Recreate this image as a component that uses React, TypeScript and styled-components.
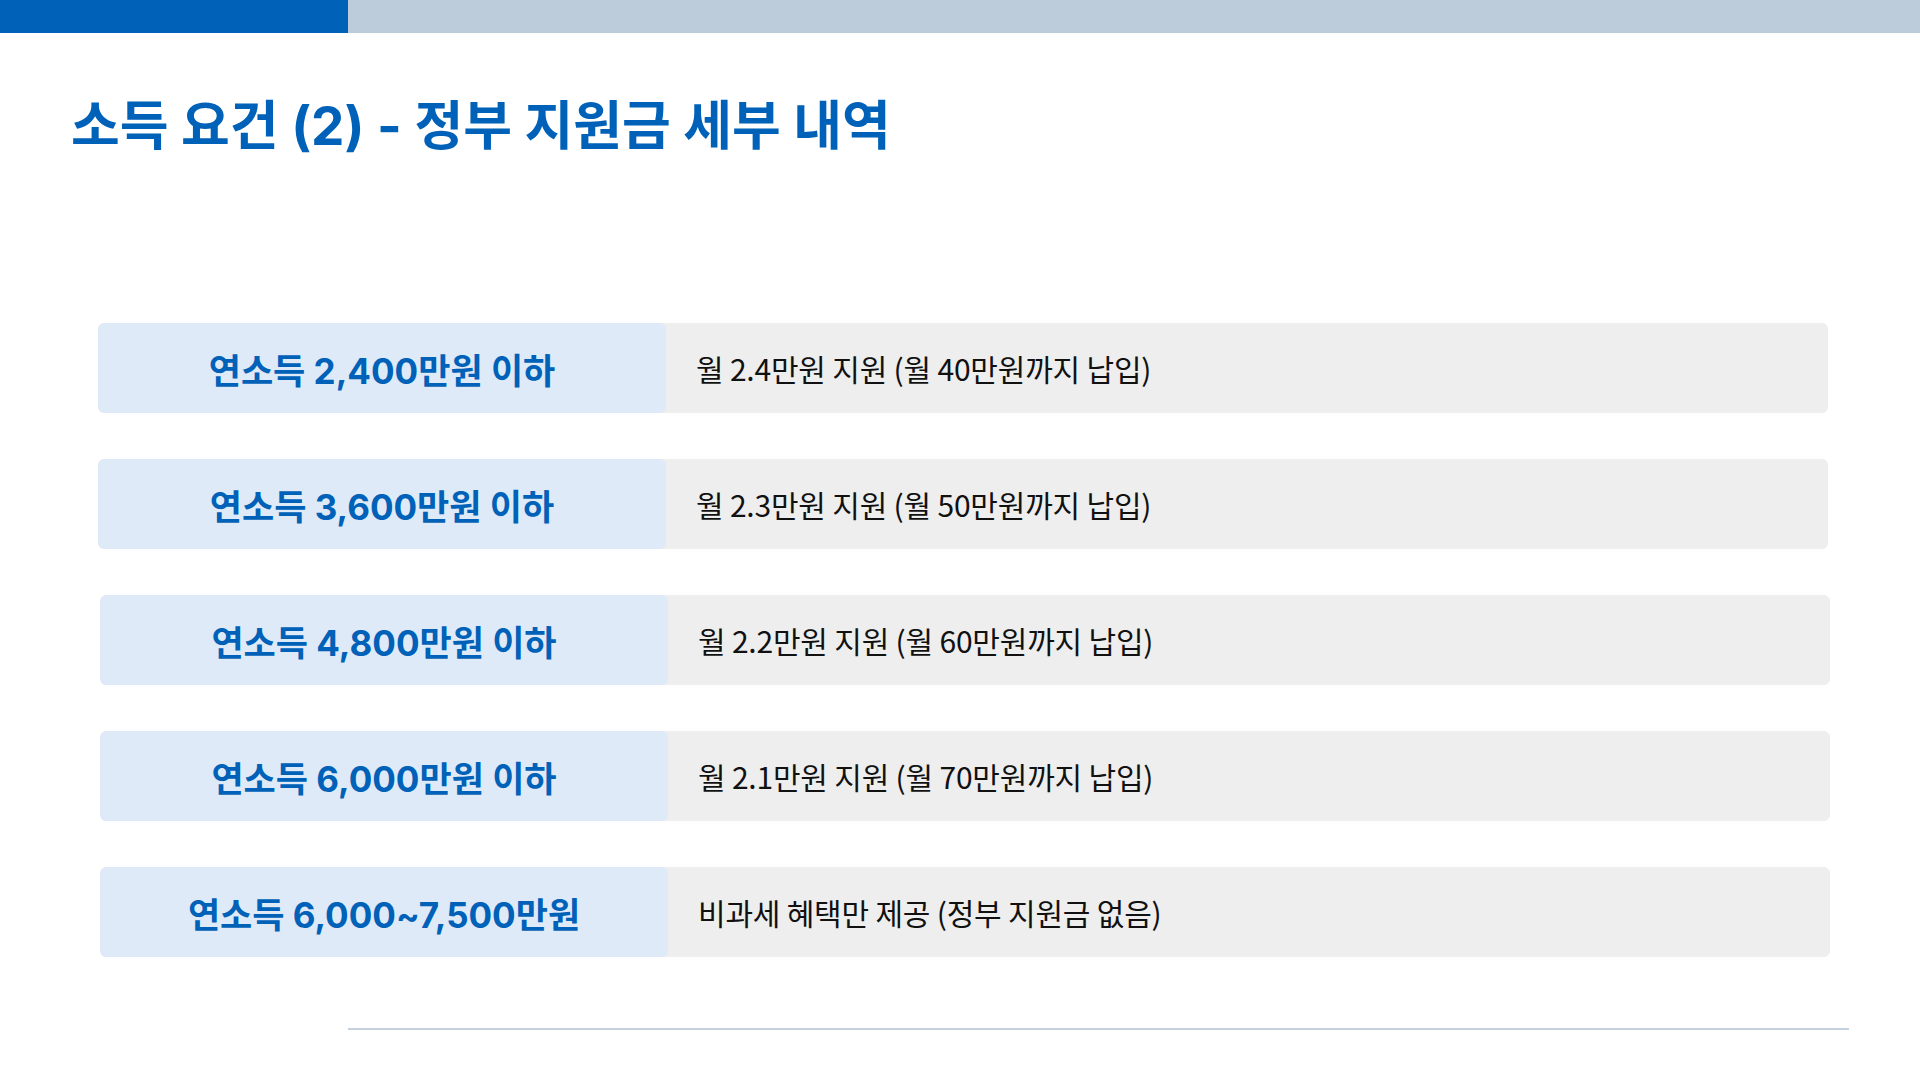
import React from "react";
import styled, { createGlobalStyle } from "styled-components";

const GlobalStyle = createGlobalStyle`
  html, body { margin: 0; padding: 0; background: #ffffff; }
  body { font-family: "Inter", "Noto Sans CJK KR", "Noto Sans", sans-serif; }
`;

const Page = styled.div`
  width: 1920px;
  height: 1080px;
  display: flex;
  flex-direction: column;
  background: #ffffff;
  overflow: hidden;
`;

const TopBar = styled.div`
  display: flex;
  height: 33px;
  background: #bdccdb;
`;

const TopBarAccent = styled.div`
  width: 348px;
  background: #0061b8;
`;

const Title = styled.h1`
  margin: 62px 0 0 71px;
  font-family: "Inter", "Noto Sans CJK KR", sans-serif;
  font-size: 53px;
  line-height: 62px;
  font-weight: 700;
  color: #0061b8;
`;

const List = styled.div`
  display: flex;
  flex-direction: column;
  align-items: flex-start;
  gap: 46px;
  margin: 166px 0 0 98px;
`;

const Row = styled.div<{ $shift: number }>`
  display: flex;
  width: 1730px;
  height: 90px;
  margin-left: ${(p) => p.$shift}px;
  border-radius: 6px;
  overflow: hidden;
  background: #eeeeee;
`;

const Label = styled.div`
  width: 568px;
  flex: none;
  display: flex;
  align-items: center;
  justify-content: center;
  background: #deeaf7;
  border-radius: 6px;
  color: #0061b8;
  font-family: "Inter", "Noto Sans CJK KR", sans-serif;
  font-size: 35px;
  font-weight: 700;
  white-space: nowrap;
`;

const Detail = styled.div`
  flex: 1;
  display: flex;
  align-items: center;
  padding-left: 30px;
  color: #111111;
  font-family: "Noto Sans CJK KR", "Noto Sans", sans-serif;
  font-size: 30px;
  font-weight: 400;
  letter-spacing: -0.2px;
  white-space: nowrap;
`;

const Divider = styled.div`
  margin: 71px 0 0 348px;
  width: 1501px;
  height: 2px;
  background: #c5d1de;
`;

const rows = [
  { label: "연소득 2,400만원 이하", detail: "월 2.4만원 지원 (월 40만원까지 납입)", shift: 0 },
  { label: "연소득 3,600만원 이하", detail: "월 2.3만원 지원 (월 50만원까지 납입)", shift: 0 },
  { label: "연소득 4,800만원 이하", detail: "월 2.2만원 지원 (월 60만원까지 납입)", shift: 2 },
  { label: "연소득 6,000만원 이하", detail: "월 2.1만원 지원 (월 70만원까지 납입)", shift: 2 },
  { label: "연소득 6,000~7,500만원", detail: "비과세 혜택만 제공 (정부 지원금 없음)", shift: 2 },
];

export default function App() {
  return (
    <>
      <GlobalStyle />
      <Page>
        <TopBar>
          <TopBarAccent />
        </TopBar>
        <Title>소득 요건 (2) - 정부 지원금 세부 내역</Title>
        <List>
          {rows.map((r) => (
            <Row key={r.label} $shift={r.shift}>
              <Label>{r.label}</Label>
              <Detail>{r.detail}</Detail>
            </Row>
          ))}
        </List>
        <Divider />
      </Page>
    </>
  );
}
